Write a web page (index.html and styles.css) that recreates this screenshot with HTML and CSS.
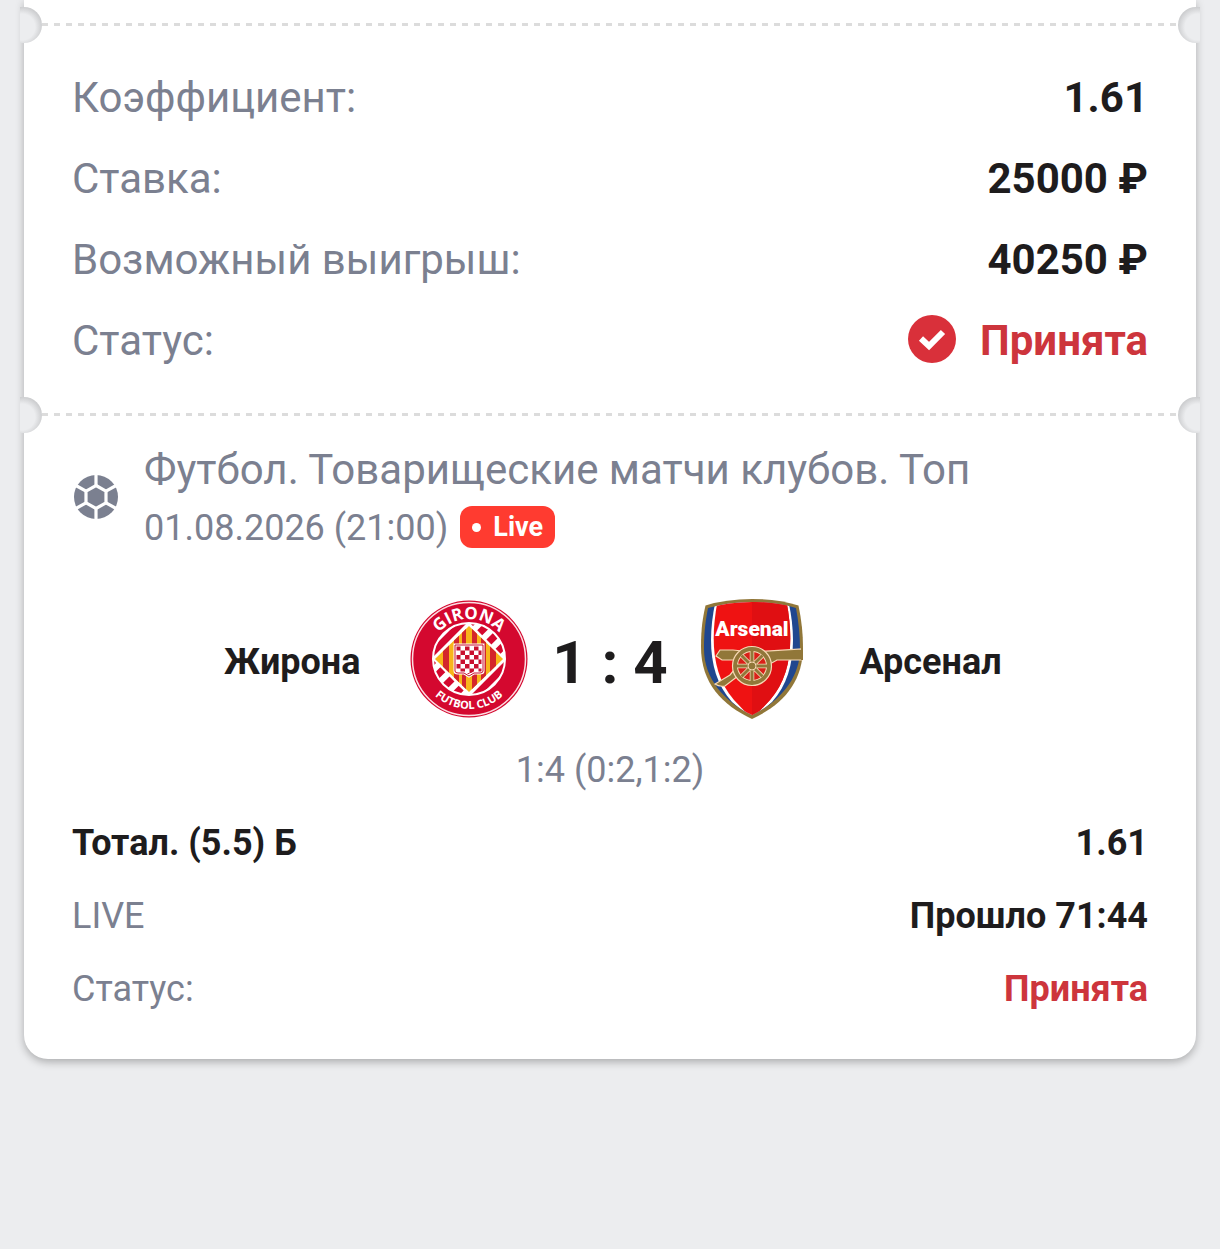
FILE: index.html
```
<!DOCTYPE html>
<html lang="ru">
<head>
  <meta charset="UTF-8">
  <meta name="viewport" content="width=device-width, initial-scale=1">
  <title>Ставка</title>
  <link rel="stylesheet" href="styles.css">
</head>
<body>

  <main class="ticket">
    <div class="divider"></div>

    <dl class="summary">
      <div class="row">
        <dt>Коэффициент:</dt>
        <dd>1.61</dd>
      </div>
      <div class="row">
        <dt>Ставка:</dt>
        <dd>25000 ₽</dd>
      </div>
      <div class="row">
        <dt>Возможный выигрыш:</dt>
        <dd>40250 ₽</dd>
      </div>
      <div class="row">
        <dt>Статус:</dt>
        <dd class="accepted">
          <svg class="check" viewBox="0 0 48 48" aria-hidden="true">
            <circle cx="24" cy="24" r="24" fill="#d9303a"/>
            <path d="M13 23.5 21 31 35 17" fill="none" stroke="#fff" stroke-width="6"/>
          </svg>
          Принята
        </dd>
      </div>
    </dl>

    <div class="divider"></div>

    <section class="event">
      <header class="event-head">
        <svg class="ball" viewBox="0 0 48 48" aria-hidden="true">
          <circle cx="24" cy="24" r="22" fill="#7b8090"/>
          <g fill="none" stroke="#fff" stroke-width="3.2">
            <path d="M24 12.5 34 18.2V29.8L24 35.5 14 29.8V18.2Z"/>
            <path d="M24 12.5V0M34 18.2 45 12M34 29.8 45 36M24 35.5V48M14 29.8 3 36M14 18.2 3 12"/>
          </g>
        </svg>
        <div>
          <h1>Футбол. Товарищеские матчи клубов. Топ</h1>
          <div class="date">
            <time datetime="2026-08-01T21:00">01.08.2026 (21:00)</time>
            <span class="live">Live</span>
          </div>
        </div>
      </header>

      <div class="match">
        <span class="team home">Жирона</span>

        <!-- Girona -->
        <svg class="crest" viewBox="0 0 120 120" role="img" aria-label="Girona Futbol Club">
          <defs>
            <clipPath id="inner"><circle cx="60" cy="60" r="36"/></clipPath>
            <clipPath id="diamond"><path d="M60 27 94 60 60 93 26 60Z"/></clipPath>
            <pattern id="checks" width="9" height="9" patternUnits="userSpaceOnUse" x="47" y="47">
              <path fill="#fff" d="M0 0H9V9H0Z"/>
              <path fill="#c8102e" d="M0 0H4.500V4.500H0ZM4.500 4.500H9V9H4.500Z"/>
            </pattern>
            <path id="arcTop" d="M20 60A40 40 0 0 1 100 60"/>
            <path id="arcBottom" d="M10 60A50 50 0 0 0 110 60"/>
          </defs>
          <circle cx="60" cy="60" r="58.5" fill="#d4082f"/>
          <circle cx="60" cy="60" r="56.5" fill="none" stroke="#fbdde2" stroke-width="1.5"/>
          <circle cx="60" cy="60" r="36" fill="#fff"/>
          <g clip-path="url(#inner)" stroke="#d4082f" fill="none">
            <path d="M20 57 57 20M63 100 100 63" stroke-width="7"/>
            <path d="M64 20 100 56M20 64 56 100" stroke-width="10" stroke-dasharray="7 6" stroke-dashoffset="2"/>
          </g>
          <circle cx="60" cy="60" r="36" fill="none" stroke="#fff" stroke-width="2"/>
          <g clip-path="url(#diamond)">
            <path d="M24 24H96V96H24Z" fill="#f8b51b"/>
            <path d="M34 24H40V96H34ZM45 24H50V96H45ZM53 24H57V96H53ZM63 24H68V96H63ZM72 24H77V96H72ZM81 24H87V96H81Z" fill="#d4252b"/>
          </g>
          <path d="M46 46H74V72Q74 74 71 74H65L60 77 55 74H49Q46 74 46 72Z" fill="url(#checks)" stroke="#fff" stroke-width="3"/>
          <path d="M46 46H74V72Q74 74 71 74H65L60 77 55 74H49Q46 74 46 72Z" fill="none" stroke="#c8102e"/>
          <text class="crest-top"><textPath href="#arcTop" startOffset="50%">GIRONA</textPath></text>
          <text class="crest-bottom"><textPath href="#arcBottom" startOffset="50%">FUTBOL CLUB</textPath></text>
        </svg>

        <strong class="score">1 : 4</strong>

        <!-- Arsenal -->
        <svg class="crest" viewBox="0 0 120 120" role="img" aria-label="Arsenal">
          <defs>
            <clipPath id="shield"><path d="M16 9Q36 3 60 3 84 3 104 9 108 30 108 50C108 80 87 103 60 116 33 103 12 80 12 50 12 30 14 20 16 9Z"/></clipPath>
          </defs>
          <path d="M13.5 6.5Q34 0 60 0 86 0 106.5 6.500 111 28 111 48C111 84 90 106 60 120 30 106 9 84 9 48 9 28 11 18 13.5 6.500Z" fill="#917739"/>
          <g clip-path="url(#shield)">
            <path d="M0 0H120V120H0Z" fill="#20478f"/>
            <path d="M24 0C15 40 17 78 40 103L60 120 80 103C103 78 105 40 96 0Z" fill="#fff"/>
            <path d="M26 0C18 40 20 76 42 101L60 120 78 101C100 76 102 40 94 0Z" fill="#ef1212"/>
            <path d="M60 0H94C102 40 100 76 78 101L60 120Z" fill="#e00f12"/>
          </g>
          <g fill="#917739" stroke="#f6d9b5" stroke-width="1.2">
            <path d="M28 51H41L60 53 110 50V61H85L78 65H60L46 77 33 87Q27 88 23 85L38 76 47 65V61H30L27 59 24 57 26 54Z"/>
            <circle cx="60" cy="67" r="19.5"/>
          </g>
          <path d="M109 49H111V61H109Z" fill="#917739"/>
          <circle cx="60" cy="67" r="15" fill="#f6d9b5"/>
          <circle cx="60" cy="67" r="14" fill="#d92018"/>
          <path d="M60 52V82M45 67H75M49.5 56.5 70.5 77.5M49.5 77.5 70.5 56.5" stroke="#f6d9b5" stroke-width="4.5"/>
          <path d="M60 52V82M45 67H75M49.5 56.5 70.5 77.5M49.5 77.5 70.5 56.5" stroke="#917739" stroke-width="3"/>
          <circle cx="60" cy="67" r="4" fill="#917739" stroke="#f6d9b5"/>
          <text class="crest-name" x="60" y="37">Arsenal</text>
        </svg>

        <span class="team">Арсенал</span>
      </div>

      <p class="periods">1:4 (0:2,1:2)</p>

      <dl class="bet">
        <div class="row">
          <dt class="outcome">Тотал. (5.5) Б</dt>
          <dd>1.61</dd>
        </div>
        <div class="row">
          <dt>LIVE</dt>
          <dd>Прошло 71:44</dd>
        </div>
        <div class="row">
          <dt>Статус:</dt>
          <dd class="accepted">Принята</dd>
        </div>
      </dl>
    </section>
  </main>

</body>
</html>
```
FILE: styles.css
```
* {
  box-sizing: border-box;
}
body {
  margin: 0;
  padding: 0 24px 48px;
  background-color: #ecedef;
  color: #1e1c1d;
  font-family: Roboto, sans-serif;
  font-size: 36px;
  line-height: 41px;
}
h1, p, dl, dd {
  margin: 0;
}
.ticket {
  padding-top: 23px;
  background-color: white;
  border-radius: 0 0 24px 24px;
  box-shadow: 0 3px 8px rgba(0,0,0,0.28);
}

/* tear line with a notch on each side */
.divider {
  position: relative;
  height: 3px;
  margin: 0 18px;
  background: repeating-linear-gradient(to right, #dcdcdc 0 6px, transparent 6px 12px);
}
.divider::before,
.divider::after {
  content: "";
  position: absolute;
  top: -16px;
  width: 22px;
  height: 36px;
}
.divider::before {
  left: -22px;
  border-radius: 0 18px 18px 0;
  background: radial-gradient(circle at 2px 20px, #ecedef 13px, #c9cacc 21px);
}
.divider::after {
  right: -22px;
  border-radius: 18px 0 0 18px;
  background: radial-gradient(circle at 20px 20px, #ecedef 13px, #c9cacc 21px);
}

.row {
  display: flex;
  justify-content: space-between;
}
.row dt {
  color: #7b8090;
}
.row dd {
  font-weight: bold;
}
.row .outcome {
  color: #1e1c1d;
  font-weight: bold;
}
.row .accepted {
  color: #cd353c;
}

.summary {
  display: grid;
  gap: 32px;
  padding: 47px 48px 48px;
  font-size: 42px;
  line-height: 49px;
}
.summary .accepted {
  display: flex;
  gap: 24px;
}
.check {
  width: 48px;
  height: 48px;
  margin-top: -1px;
}

.event {
  padding: 29px 48px 49px;
}
.event-head {
  display: flex;
  align-items: center;
  gap: 24px;
  color: #7b8090;
}
.event-head h1 {
  font-size: 42px;
  font-weight: normal;
  line-height: 49px;
}
.ball {
  flex: none;
  width: 48px;
  height: 48px;
}
.date {
  display: flex;
  align-items: center;
  gap: 12px;
  margin-top: 11px;
}
.date time {
  padding-top: 3px;
}
.live {
  display: flex;
  align-items: center;
  gap: 12px;
  height: 42px;
  padding: 0 12px;
  border-radius: 12px;
  background-color: #ff3b30;
  color: white;
  font-size: 27px;
  font-weight: bold;
}
.live::before {
  content: "";
  width: 9px;
  height: 9px;
  border-radius: 50%;
  background-color: white;
}

.match {
  display: grid;
  grid-template-columns: 1fr 120px 163px 120px 1fr;
  align-items: center;
  margin-top: 50px;
}
.team {
  padding: 6px 48px 0;
  font-weight: bold;
}
.home {
  text-align: right;
}
.crest {
  width: 120px;
  height: 120px;
}
.score {
  padding-top: 8px;
  font-size: 60px;
  line-height: 70px;
  text-align: center;
}
.crest text {
  fill: white;
  text-anchor: middle;
}
.crest .crest-top {
  font: bold 17px "Open Sans", sans-serif;
}
.crest .crest-bottom {
  font: bold 11px "Open Sans", sans-serif;
}
.crest .crest-name {
  font: 900 21px Roboto, sans-serif;
}

.periods {
  margin-top: 31px;
  color: #7b8090;
  text-align: center;
}
.bet {
  display: grid;
  gap: 32px;
  margin-top: 32px;
}
```
